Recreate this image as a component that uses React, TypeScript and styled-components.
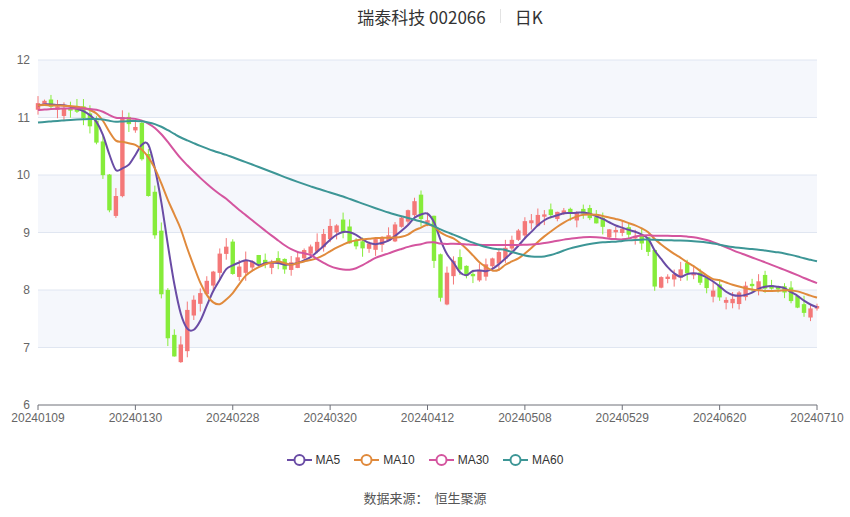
import React from 'react';
import styled, { createGlobalStyle } from 'styled-components';

const Global = createGlobalStyle`
  body { margin: 0; background: #fff; font-family: "Noto Sans CJK SC", "Liberation Sans", sans-serif; }
`;

const Page = styled.div`
  width: 850px;
  height: 517px;
  display: flex;
  flex-direction: column;
  align-items: center;
`;

const Title = styled.div`
  height: 32px;
  display: flex;
  align-items: center;
  gap: 14px;
  font-size: 17px;
  color: #333;
  padding-left: 50px;
`;

const Divider = styled.span`
  width: 1px;
  height: 14px;
  background: #e3e3e3;
`;

const Legend = styled.div`
  margin-top: 28px;
  display: flex;
  gap: 14px;
  font-size: 12px;
  color: #333;
  font-family: "Liberation Sans", sans-serif;
`;

const LegendItem = styled.div`
  display: flex;
  align-items: center;
  gap: 4px;
`;

const Source = styled.div`
  margin-top: 21px;
  font-size: 13px;
  color: #555;
`;

const X0 = 38, X1 = 817, TOP = 20, BOT = 365; // svg coords (svg starts at y=40)
const yOf = (p: number) => BOT - ((p - 6) / 6) * (BOT - TOP);
const N = 121;
const step = (X1 - X0) / (N - 1);
const xOf = (i: number) => X0 + i * step;

const keys: [number, number][] = [
  [-70, 10.5], [-40, 10.7], [-20, 11.1], [-10, 11.2], [0, 11.25], [3, 11.15], [6, 11.05], [8, 10.9], [9, 10.6], [10, 10.0],
  [11, 9.4], [12, 9.7], [13, 11.0], [14, 10.9], [15, 10.8], [16, 10.2], [17, 9.6], [18, 8.9],
  [19, 7.9], [20, 7.1], [21, 6.8], [22, 7.0], [23, 7.7], [24, 7.9], [25, 8.0], [26, 8.2], [27, 8.4],
  [28, 8.7], [29, 8.8], [30, 8.2], [32, 8.5], [35, 8.4], [38, 8.4], [40, 8.6], [42, 8.8], [44, 9.0],
  [46, 9.1], [48, 8.8], [50, 8.7], [52, 8.9], [54, 9.0], [56, 9.3], [58, 9.6], [59, 9.3], [60, 9.2],
  [61, 8.5], [62, 7.8], [63, 8.3], [64, 8.5], [66, 8.2], [68, 8.4], [70, 8.6], [72, 8.8], [74, 9.1],
  [76, 9.2], [78, 9.3], [80, 9.3], [82, 9.4], [84, 9.4], [86, 9.2], [88, 9.1], [90, 9.0], [92, 8.9],
  [94, 8.6], [95, 8.0], [97, 8.3], [99, 8.4], [101, 8.3], [103, 8.1], [105, 7.8], [107, 7.8],
  [109, 8.0], [111, 8.1], [113, 8.1], [115, 8.0], [117, 7.7], [119, 7.6], [120, 7.7],
];

const interp = (i: number) => {
  for (let k = 0; k < keys.length - 1; k++) {
    const [a, pa] = keys[k], [b, pb] = keys[k + 1];
    if (i >= a && i <= b) return pa + ((pb - pa) * (i - a)) / (b - a);
  }
  return keys[keys.length - 1][1];
};
const noise = (i: number) => Math.sin(i * 12.9898) * 43758.5453 % 1;

const closes: number[] = [];
for (let i = -70; i < N; i++) closes.push(interp(i) + noise(i) * 0.08);
const OFF = 70;

const ma = (n: number) => {
  const out: number[] = [];
  for (let i = 0; i < N; i++) {
    let s = 0;
    for (let k = 0; k < n; k++) s += closes[OFF + i - k];
    out.push(s / n);
  }
  return out;
};

const smoothPath = (vals: number[]) => {
  const pts = vals.map((v, i) => [xOf(i), yOf(v)]);
  let d = `M${pts[0][0]},${pts[0][1]}`;
  for (let i = 0; i < pts.length - 1; i++) {
    const p0 = pts[Math.max(0, i - 1)], p1 = pts[i], p2 = pts[i + 1], p3 = pts[Math.min(pts.length - 1, i + 2)];
    const c1 = [p1[0] + (p2[0] - p0[0]) / 6, p1[1] + (p2[1] - p0[1]) / 6];
    const c2 = [p2[0] - (p3[0] - p1[0]) / 6, p2[1] - (p3[1] - p1[1]) / 6];
    d += ` C${c1[0]},${c1[1]} ${c2[0]},${c2[1]} ${p2[0]},${p2[1]}`;
  }
  return d;
};

const lines = [
  { name: 'MA5', n: 5, color: '#6a4ca5' },
  { name: 'MA10', n: 10, color: '#e08a3c' },
  { name: 'MA30', n: 30, color: '#d4559f' },
  { name: 'MA60', n: 60, color: '#3d9696' },
];

const dates = ['20240109', '20240130', '20240228', '20240320', '20240412', '20240508', '20240529', '20240620', '20240710'];

const Chart = () => {
  const candles = [];
  for (let i = 0; i < N; i++) {
    const c = closes[OFF + i];
    const prev = closes[OFF + i - 1];
    const up = noise(i + 300) > 0 ? c >= prev - 0.05 : c > prev;
    const body = Math.max(0.04, Math.abs(c - prev) + Math.abs(noise(i + 50)) * 0.12);
    const o = up ? c - body : c + body;
    const hi = Math.max(o, c) + Math.abs(noise(i + 90)) * 0.15;
    const lo = Math.min(o, c) - Math.abs(noise(i + 130)) * 0.15;
    const col = up ? '#f47878' : '#86ec3a';
    const x = xOf(i);
    candles.push(
      <g key={i}>
        <line x1={x} x2={x} y1={yOf(hi)} y2={yOf(lo)} stroke={col} strokeWidth={1} />
        <rect x={x - 2.2} width={4.4} y={yOf(Math.max(o, c))} height={Math.max(1, yOf(Math.min(o, c)) - yOf(Math.max(o, c)))} fill={col} />
      </g>
    );
  }
  return (
    <svg width={850} height={385} style={{ display: 'block', marginTop: 8 }}>
      {[12, 10, 8].map(v => (
        <rect key={v} x={X0} width={X1 - X0} y={yOf(v)} height={yOf(v - 1) - yOf(v)} fill="#f5f7fc" />
      ))}
      {[12, 11, 10, 9, 8, 7].map(v => (
        <line key={v} x1={X0} x2={X1} y1={yOf(v)} y2={yOf(v)} stroke="#e0e6f1" />
      ))}
      {[12, 11, 10, 9, 8, 7, 6].map(v => (
        <text key={v} x={X0 - 8} y={yOf(v) + 4} textAnchor="end" fontSize={12} fill="#666" fontFamily="Liberation Sans">{v}</text>
      ))}
      <line x1={X0} x2={X1} y1={BOT} y2={BOT} stroke="#6e7079" />
      {dates.map((d, k) => {
        const x = xOf(k * 15);
        return (
          <g key={d}>
            <line x1={x} x2={x} y1={BOT} y2={BOT + 5} stroke="#6e7079" />
            <text x={x} y={BOT + 17} textAnchor="middle" fontSize={12} fill="#666" fontFamily="Liberation Sans">{d}</text>
          </g>
        );
      })}
      {candles}
      {lines.map(l => (
        <path key={l.name} d={smoothPath(ma(l.n))} fill="none" stroke={l.color} strokeWidth={2} />
      ))}
    </svg>
  );
};

export default function App() {
  return (
    <Page>
      <Global />
      <Title>瑞泰科技 002066<Divider />日K</Title>
      <Chart />
      <Legend>
        {lines.map(l => (
          <LegendItem key={l.name}>
            <svg width={25} height={14}>
              <line x1={0} x2={25} y1={7} y2={7} stroke={l.color} strokeWidth={2} />
              <circle cx={12.5} cy={7} r={5} fill="#fff" stroke={l.color} strokeWidth={2} />
            </svg>
            {l.name}
          </LegendItem>
        ))}
      </Legend>
      <Source>数据来源：&nbsp;&nbsp;恒生聚源</Source>
    </Page>
  );
}
